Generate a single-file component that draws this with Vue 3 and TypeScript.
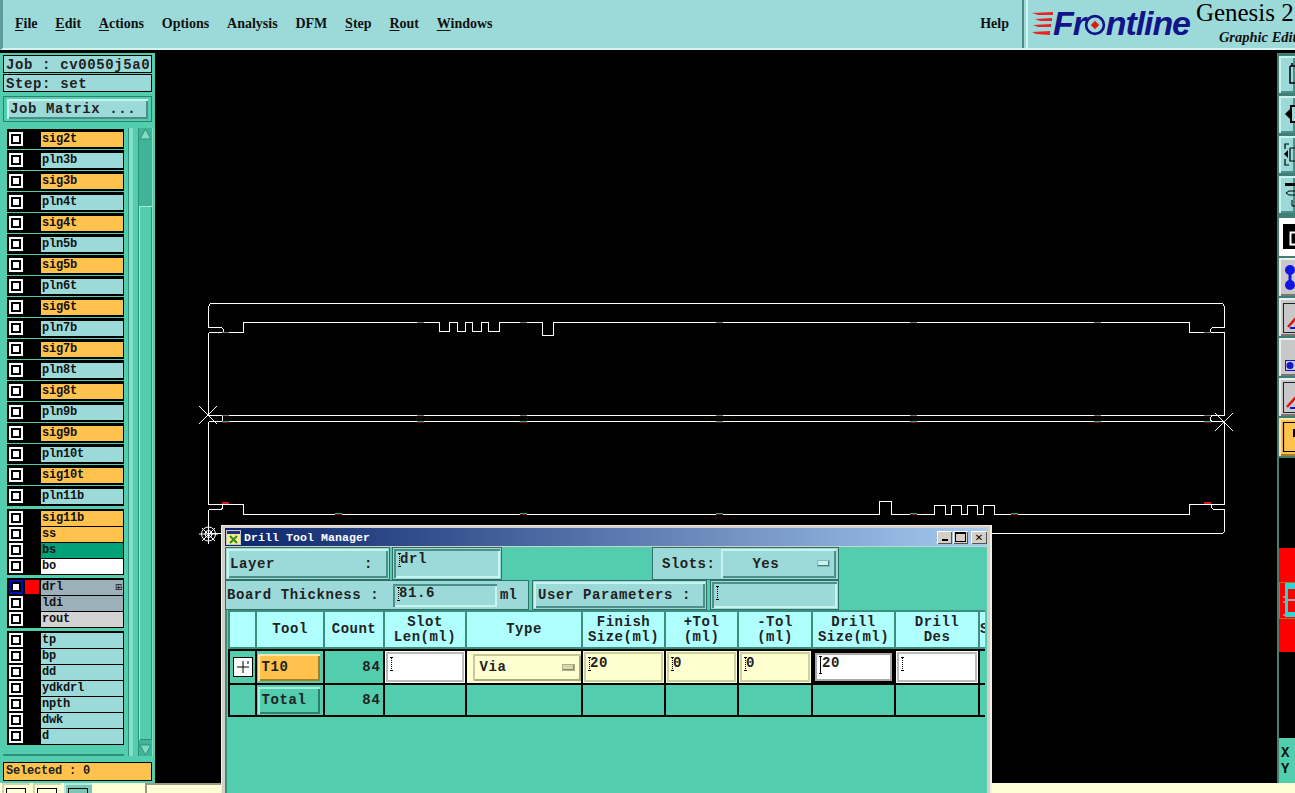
<script setup lang="ts">
interface Layer { name: string; color?: string }
const menus = [
  ['', 'F', 'ile'], ['', 'E', 'dit'], ['', 'A', 'ctions'], ['O', 'p', 'tions'],
  ['Analysis', '', ''], ['DFM', '', ''], ['', 'S', 'tep'], ['', 'R', 'out'], ['', 'W', 'indows'],
]
const singles: Layer[] = ['sig2t','pln3b','sig3b','pln4t','sig4t','pln5b','sig5b','pln6t','sig6t','pln7b','sig7b','pln8t','sig8t','pln9b','sig9b','pln10t','sig10t','pln11b']
  .map(n => ({ name: n, color: n.startsWith('sig') ? 'orange' : 'teal' }))
const groups: Layer[][] = [
  [{ name: 'sig11b', color: 'orange' }, { name: 'ss', color: 'orange' }, { name: 'bs', color: 'green' }, { name: 'bo', color: 'white' }],
  [{ name: 'drl', color: 'slate' }, { name: 'ldi', color: 'slate' }, { name: 'rout', color: 'silver' }],
  ['tp','bp','dd','ydkdrl','npth','dwk','d'].map(n => ({ name: n, color: 'teal' })),
]
const headers = [['', ''], ['Tool', ''], ['Count', ''], ['Slot', 'Len(ml)'], ['Type', ''], ['Finish', 'Size(ml)'], ['+Tol', '(ml)'], ['-Tol', '(ml)'], ['Drill', 'Size(ml)'], ['Drill', 'Des'], ['S', '']]
const outline = 'M208 327V306L210 303H1222L1224 306V327H1212L1210 329V332H1189V322H553V335H542V322H499V331H488V322H481V331H472V322H465V331H457V322H449V331H439V322H243V332H223V329L221 327H208M208 332H223M208 332V415H222V421M1210 332H1224V415H1212L1210 417V420L1212 421M208 415H1224M208 421H1224M208 421V504H243V514H879V501H891V514H934V505H945V514H951V505H961V514H967V505H977V514H983V505H994V514H1189V504H1224V421M208 509H221L222 507V504M1224 509H1213L1211 507V504M208 509V533H1222L1224 531V509'
const ticksGray = [[222,332],[417,322],[520,322],[716,322],[910,322],[1094,322],[1204,332],[222,415],[417,415],[520,415],[716,415],[910,415],[1094,415],[1204,415]]
const ticksTeal = [[222,421],[417,421],[520,421],[716,421],[910,421],[1094,421],[1204,421],[335,513],[520,513],[716,513],[910,513],[1011,513]]
</script>

<template>
  <div class="screen">
    <header class="topbar">
      <nav class="menu">
        <span v-for="m in menus" :key="m.join('')" class="menu-item">{{ m[0] }}<u>{{ m[1] }}</u>{{ m[2] }}</span>
        <span class="menu-item help">Help</span>
      </nav>
      <div class="brand">
        <svg class="streaks" width="22" height="24" viewBox="0 0 22 24">
          <path d="M0 1 L21 0 V3 L6 3Z M3 7 L20 6 V9 L8 9Z M1 13 L19 12 V15 L6 15Z M0 20 L18 19 V23 L4 22Z" fill="#ee2222" />
        </svg>
        <span class="logo">Fr<svg class="logo-o" width="22" height="22" viewBox="0 0 21 21"><circle cx="10.500" cy="10.500" r="8.500" fill="none" stroke="#14148a" stroke-width="2.500" /><path d="M10.500 6.500 14.500 10.500 10.500 14.500 6.500 10.500Z" fill="#e01818" /></svg>ntline</span>
        <div class="product">
          <span class="genesis">Genesis 2</span>
          <span class="edit">Graphic Edit</span>
        </div>
      </div>
    </header>

    <main class="middle">
      <aside class="left">
        <div class="info">Job : cv0050j5a0</div>
        <div class="info">Step: set</div>
        <div class="matrix-wrap"><div class="matrix raised">Job Matrix ...</div></div>
        <div class="list-area">
          <div class="list-frame">
            <div class="list">
              <div v-for="l in singles" :key="l.name" class="group">
                <div class="row">
                  <span class="check"></span><span class="swatch"></span>
                  <span class="label" :class="l.color">{{ l.name }}</span>
                </div>
              </div>
              <div v-for="(g, i) in groups" :key="i" class="group block">
                <div v-for="l in g" :key="l.name" class="row">
                  <span class="check" :class="{ active: l.name === 'drl' }"></span>
                  <span class="swatch" :class="{ red: l.name === 'drl' }"></span>
                  <span class="label" :class="l.color">{{ l.name }}<i v-if="l.name === 'drl'" class="mini">⊞</i></span>
                </div>
              </div>
            </div>
          </div>
          <div class="scroll">
            <svg width="13" height="12" viewBox="0 0 13 12"><path d="M6.500 1 12 11H1Z" fill="#7fdcc4" stroke="#2f8f7c" /></svg>
            <div class="track"><div class="thumb"></div></div>
            <svg width="13" height="12" viewBox="0 0 13 12"><path d="M6.500 11 12 1H1Z" fill="#7fdcc4" stroke="#2f8f7c" /></svg>
          </div>
        </div>
        <div class="selected">Selected : 0</div>
      </aside>

      <section class="canvas">
        <svg class="drawing" width="1122" height="730" viewBox="155 53 1122 730">
          <g transform="translate(.5 .5)">
            <path :d="outline" fill="none" stroke="#fff" stroke-width="1" shape-rendering="crispEdges" />
          </g>
          <rect v-for="t in ticksGray" :key="'g' + t[0] + t[1]" :x="t[0]" :y="t[1]" width="7" height="1" fill="#777" />
          <rect v-for="t in ticksTeal" :key="'t' + t[0] + t[1]" :x="t[0]" :y="t[1]" width="7" height="1" fill="#2a9f98" />
          <rect v-for="t in ticksTeal" :key="'r' + t[0] + t[1]" :x="t[0]" :y="t[1] + 1" width="7" height="1" fill="#701414" />
          <rect x="222" y="502" width="7" height="2" fill="#d81818" />
          <rect x="1204" y="502" width="7" height="2" fill="#d81818" />
          <path d="M199 406 217 424M217 406 199 424M1215 413 1233 431M1233 413 1215 431" stroke="#fff" fill="none" />
          <g stroke="#fff" fill="none">
            <path d="M199 534H218M208.500 525V544M202 528 215 541M215 528 202 541" />
            <circle cx="208.500" cy="534" r="3.500" />
            <circle cx="208.500" cy="534" r="7" />
          </g>
        </svg>
      </section>

      <aside class="right">
        <div class="rbtn t raised"><svg width="16" height="36" viewBox="1 0 16 36"><path d="M12 10H17M12 10V27H17M14 7V10" stroke="#000" stroke-width="1.500" fill="none" /></svg></div>
        <div class="rbtn t raised"><svg width="16" height="36" viewBox="1 0 16 36"><path d="M7 18 12 13V23Z" fill="#000" /><path d="M12 9H17V27H12Z" fill="#000" /><path d="M14 11H17V25H14Z" fill="#9cdada" /></svg></div>
        <div class="rbtn t raised"><svg width="16" height="36" viewBox="1 0 16 36"><path d="M6 18 10 14V22Z" fill="#000" /><path d="M11 8H7V13M7 23V29H11M12 12H17M12 12V25H17" stroke="#000" fill="none" stroke-width="1.200" /></svg></div>
        <div class="rbtn t raised"><svg width="16" height="36" viewBox="1 0 16 36"><path d="M7 7H17V10H7Z" fill="#000" /><path d="M17 15H11L8 17 11 19H17M14 24V30H17" stroke="#000" fill="none" /></svg></div>
        <div class="spacer"></div>
        <div class="rbtn black"><svg width="12" height="24" viewBox="0 0 12 24"><rect x="7.500" y="8.500" width="6" height="12" fill="#000" stroke="#fff" stroke-width="2" /></svg></div>
        <div class="rbtn g"><svg width="16" height="38" viewBox="1 0 16 38"><circle cx="12" cy="12" r="5" fill="#1414e0" /><circle cx="12" cy="27" r="5" fill="#1414e0" /><rect x="10.500" y="12" width="3" height="15" fill="#1414e0" /></svg></div>
        <div class="rbtn g"><svg width="16" height="38" viewBox="1 0 16 38"><rect x="5.500" y="5.500" width="14" height="29" fill="none" stroke="#222" /><path d="M10 29 18 20" stroke="#e01010" stroke-width="2.500" /><rect x="12" y="29" width="6" height="2" fill="#1414d8" /></svg></div>
        <div class="rbtn g"><svg width="16" height="38" viewBox="1 0 16 38"><rect x="7.500" y="22.500" width="12" height="10" fill="none" stroke="#1414c8" /><circle cx="12" cy="27.500" r="3.500" fill="#1414c8" /></svg></div>
        <div class="rbtn g"><svg width="16" height="38" viewBox="1 0 16 38"><rect x="5.500" y="4.500" width="14" height="30" fill="none" stroke="#222" /><path d="M9 29 18 19" stroke="#e01010" stroke-width="2.500" /><rect x="12" y="29" width="6" height="2" fill="#1414d8" /></svg></div>
        <div class="rbtn o"><svg width="16" height="38" viewBox="1 0 16 38"><path d="M18 4.500H5.500V33.500H18" fill="none" stroke="#000" stroke-width="1.200" /><path d="M15 11H17V19H15Z" fill="#000" /></svg></div>
        <div class="mini-map">
          <svg width="16" height="279" viewBox="0 0 16 279">
            <rect x="0" y="90" width="16" height="104" fill="#f00" />
            <rect x="0.500" y="124.500" width="20" height="36" fill="none" stroke="#b87018" />
            <path d="M6 125H16V131H9V154H16V159H6Z" fill="#28d8d8" />
            <rect x="9" y="141" width="7" height="2" fill="#aaa" />
            <path d="M4 139H6M4 144H6M4 157H6" stroke="#eee" />
          </svg>
        </div>
        <div class="xy">X<br />Y</div>
      </aside>
    </main>

    <footer class="bottom">
      <span class="bbtn"></span><span class="bbtn"></span><span class="bbtn sel"></span>
      <span class="bgap"></span>
      <span class="binput"></span>
    </footer>

    <section class="dialog">
      <div class="title">
        <svg width="15" height="15" viewBox="0 0 15 15"><rect width="15" height="15" fill="#c8c8c8" /><rect x="1" y="1" width="13" height="3" fill="#2a2a7a" /><rect x="1" y="4" width="13" height="10" fill="#f0ee90" /><path d="M4 6 11 13M11 6 4 13" stroke="#3c8a22" stroke-width="2" /></svg>
        <span class="title-text">Drill Tool Manager</span>
        <div class="win-btns">
          <span class="wb"><i class="min"></i></span>
          <span class="wb"><i class="max"></i></span>
          <span class="wb close">✕</span>
        </div>
      </div>
      <div class="form-row r1">
        <div class="layer-wrap"><div class="layer-btn raised"><span>Layer</span><span>:</span></div></div>
        <div class="field-wrap w1"><div class="field sunken"><i class="caret"></i>drl</div></div>
        <div class="slots">
          <span>Slots:</span>
          <div class="opt raised"><span>Yes</span><i class="dash"></i></div>
        </div>
      </div>
      <div class="form-row r2">
        <div class="board">
          <span class="board-label">Board Thickness :</span>
          <div class="field sunken small"><i class="caret"></i>81.6</div>
          <span class="ml">ml</span>
        </div>
        <div class="user-wrap"><div class="user raised">User Parameters :</div></div>
        <div class="field-wrap w2"><div class="field sunken"><i class="caret"></i></div></div>
      </div>
      <div class="table">
        <div class="thead">
          <div v-for="(h, i) in headers" :key="i" class="th" :class="{ cut: i === 10 }"><span>{{ h[0] }}</span><span v-if="h[1]">{{ h[1] }}</span></div>
        </div>
        <div class="tbody">
          <div class="td"><span class="plus"><svg width="18" height="18" viewBox="0 0 18 18"><path d="M3 9H15M9 3V15M14 3V6" stroke="#000" fill="none" /></svg></span></div>
          <div class="td"><div class="tool raised orange-btn">T10</div></div>
          <div class="td num">84</div>
          <div class="td cell-in white-in"><i class="caret"></i></div>
          <div class="td pale-cell"><div class="via"><span>Via</span><i class="dash"></i></div></div>
          <div class="td cell-in yellow-in"><i class="caret"></i>20</div>
          <div class="td cell-in yellow-in"><i class="caret"></i>0</div>
          <div class="td cell-in yellow-in"><i class="caret"></i>0</div>
          <div class="td cell-in focus-in"><i class="caret solid"></i>20</div>
          <div class="td cell-in white-in"><i class="caret"></i></div>
          <div class="td"></div>

          <div class="td"></div>
          <div class="td"><div class="tool raised green-btn">Total</div></div>
          <div class="td num">84</div>
          <div class="td"></div><div class="td"></div><div class="td"></div><div class="td"></div>
          <div class="td"></div><div class="td"></div><div class="td"></div><div class="td"></div>
        </div>
      </div>
    </section>
  </div>
</template>

<style>
html, body { margin: 0; background: #000; overflow: hidden; }
</style>

<style scoped>
.screen {
  --teal: #9cdada; --green: #52cdae; --orange: #ffc24d;
  position: relative; width: 1295px; height: 793px; overflow: hidden;
  display: flex; flex-direction: column; background: #000;
  font-family: "Liberation Mono", monospace; color: #111;
}
.raised { box-shadow: inset 2px 2px 0 #c8f4f0, inset -2px -2px 0 #4b8f88; }
.sunken { box-shadow: inset 2px 2px 0 #4b8f88, inset -2px -2px 0 #c8f4f0; }

.topbar {
  height: 50px; flex: none; display: flex; background: var(--teal);
  box-sizing: border-box; border-left: 3px solid #5b9c98; border-bottom: 2px solid #d4f4f2;
  margin-bottom: 3px;
}
.menu {
  width: 1021px; flex: none; display: flex; align-items: center; gap: 17.800px; padding: 0 13px 0 12px;
  box-sizing: border-box; border-right: 2px solid #4f8a86;
  font: bold 14px "Liberation Serif", serif;
}
.help { margin-left: auto; }
.menu-item u { text-underline-offset: 2px; }
.brand { flex: 1; display: flex; align-items: flex-start; border-left: 2px solid #d4f4f2; margin-left: 2px; padding-left: 4px; min-width: 0; overflow: hidden; }
.streaks { margin: 12px 0 0 0; flex: none; }
.logo { font: italic bold 34px "Liberation Sans", sans-serif; color: #14148a; letter-spacing: -1.100px; margin: 5px 0 0 -1px; display: flex; align-items: center; height: 36px; flex: none; }
.logo-o { margin: 4px 0 0 -1px; flex: none; }
.product { display: flex; flex-direction: column; margin-left: 6px; flex: none; white-space: nowrap; }
.genesis { font: 25px/26px "Liberation Serif", serif; color: #000; }
.edit { font: italic bold 14.500px/14px "Liberation Serif", serif; margin: 4px 0 0 23px; }

.middle { flex: 1; display: flex; min-height: 0; }
.left {
  width: 155px; flex: none; box-sizing: border-box; background: var(--green); padding: 2px 3px 0 3px;
  display: flex; flex-direction: column;
}
.info {
  height: 18px; flex: none; box-sizing: border-box; border: 1px solid #000; background: var(--teal); margin-bottom: 1px;
  font-size: 14px; font-weight: bold; line-height: 18px; letter-spacing: .62px; padding-left: 2px; color: #222; white-space: nowrap;
}
.matrix-wrap { margin: 3px 0 6px; padding: 2px 3px; height: 26px; box-sizing: border-box; background: var(--green); border: 1px solid #2f7f6e; }
.matrix { height: 20px; background: var(--teal); font-size: 14px; font-weight: bold; line-height: 21px; letter-spacing: .62px; padding-left: 3px; color: #222; }
.list-area { height: 628px; flex: none; display: flex; gap: 5px; }
.list-frame { width: 130px; flex: none; box-sizing: border-box; padding: 0 6px 0 0; border-right: 4px solid #82e0c8; box-shadow: inset -1px 0 0 #2f8f7c; }
.list { display: flex; flex-direction: column; gap: 1px; padding: 1px 0 0 4px; width: 117px; height: 625px; box-sizing: content-box; border-bottom: 2px solid #2f8f7c; }
.group { background: #000; padding: 2px 0 2px 2px; height: 20px; box-sizing: border-box; flex: none; }
.group.block { height: auto; padding: 1px 0 1px 2px; margin-top: 2px; }
.row { height: 16px; display: flex; align-items: center; }
.check { width: 14px; height: 14px; flex: none; box-sizing: border-box; background: #fff; border: 2px solid #fff; box-shadow: inset 0 0 0 2px #000; }
.check.active { border-color: #0010b0; }
.swatch { width: 14px; height: 14px; flex: none; margin: 0 2px; }
.swatch.red { background: #f00; }
.label {
  flex: 1; height: 15px; padding-left: 1px; font-size: 12px; font-weight: bold; line-height: 15px; letter-spacing: -.2px; color: #111;
  display: flex; justify-content: space-between; margin-right: 1px;
}
.teal { background: var(--teal); } .orange { background: var(--orange); }
.green { background: #00a078; } .white { background: #fff; }
.slate { background: #9cb0ba; } .silver { background: #d3d3d3; }
.mini { font: 9px/15px "DejaVu Sans", sans-serif; padding-right: 1px; }
.scroll { width: 15px; flex: none; background: #41b398; display: flex; flex-direction: column; align-items: center; box-shadow: inset 1px 0 0 #2f8f7c, inset -1px 0 0 #82e0c8; }
.track { flex: 1; width: 100%; padding: 66px 1px 4px; box-sizing: border-box; display: flex; }
.thumb { flex: 1; background: var(--green); box-shadow: inset 1px 1px 0 #9ceeda, inset -1px -1px 0 #2f8f7c; }
.selected { margin-top: 6px; height: 19px; box-sizing: border-box; border: 1px solid #000; background: var(--orange); font-size: 12px; font-weight: bold; line-height: 17px; letter-spacing: -.2px; padding-left: 2px; color: #222; }

.canvas { flex: 1; position: relative; background: #000; min-width: 0; }
.drawing { position: absolute; left: 0; top: 0; }

.right { width: 18px; flex: none; display: flex; flex-direction: column; background: #3f7f76; padding-top: 3px; box-sizing: border-box; overflow: hidden; border-left: 2px solid #3f7f76; }
.rbtn { height: 37px; flex: none; margin: 0 0 3px 0; background: var(--teal); overflow: hidden; box-sizing: border-box; }
.rbtn svg { display: block; }
.spacer { height: 2px; flex: none; }
.rbtn.black { background: #000; border: solid #fff; border-width: 6px 0 7px 4px; height: 38px; box-shadow: none; margin-bottom: 2px; outline: 0; }
.rbtn.g { background: #c8c8c8; box-shadow: inset 2px 2px 0 #eee, inset 0 -2px 0 #777; height: 38px; margin-bottom: 2px; }
.rbtn.o { background: var(--orange); box-shadow: inset 2px 2px 0 #ffe6a8, inset 0 -2px 0 #a87c20; height: 38px; margin-bottom: 2px; }
.mini-map { flex: 1; background: #000; min-height: 0; overflow: hidden; }
.mini-map svg { display: block; }
.xy { height: 45px; flex: none; background: var(--green); font-size: 14px; font-weight: bold; line-height: 16px; padding: 7px 0 0 2px; box-sizing: border-box; margin-top: -1px; }

.bottom { height: 10px; flex: none; background: #ffffd6; display: flex; gap: 3px; padding-left: 2px; }
.bbtn { width: 28px; height: 12px; box-sizing: border-box; background: #ffffd6; box-shadow: inset 2px 2px 0 #d4d4b0; }
.bbtn::after { content: ""; display: block; margin: 5px 4px 0; height: 8px; border: 1px solid #000; }
.bbtn.sel { background: #78c8b8; box-shadow: inset 2px 2px 0 #b6e8dc; }
.bgap { width: 49px; }
.binput { width: 80px; box-shadow: inset 2px 2px 0 #9a9a86; margin-left: -2px; }

.dialog {
  position: absolute; left: 221px; top: 525px; width: 771px; height: 290px; box-sizing: border-box;
  border: 1px solid #efefe8; border-width: 1px 2px 0 1px; background: #d4d0c8; padding: 2px 3px 0 3px;
  display: flex; flex-direction: column;
}
.title {
  height: 18px; flex: none; display: flex; align-items: center; padding-left: 1px; gap: 3px; margin-bottom: 1px;
  background: linear-gradient(90deg, #0a246a, #a6caf0);
}
.title-text { color: #fff; font-size: 11.500px; font-weight: bold; letter-spacing: .1px; }
.win-btns { margin-left: auto; display: flex; gap: 1px; }
.wb { width: 15px; height: 13px; background: #d4d0c8; box-shadow: inset 1px 1px 0 #fff, inset -1px -1px 0 #555; display: flex; align-items: center; justify-content: center; font: bold 10px "DejaVu Sans", sans-serif; color: #000; }
.wb.close { margin-left: 2px; width: 16px; }
.min { width: 6px; height: 2px; background: #000; margin-top: 6px; }
.max { width: 9px; height: 7px; border: 1px solid #000; border-top-width: 2px; }

.form-row { display: flex; flex: none; }
.dialog .form-row, .dialog .table { background: var(--green); }
.r1 { height: 33px; }
.r2 { height: 30px; }
.layer-wrap { width: 165px; flex: none; background: var(--teal); padding: 2px; box-sizing: border-box; box-shadow: inset 0 0 0 1px #2f6f68; margin-right: 2px; }
.layer-btn { height: 29px; display: flex; justify-content: space-between; align-items: center; background: var(--teal); padding: 0 15px 0 3px; font-size: 14px; font-weight: bold; letter-spacing: .6px; color: #222; }
.field-wrap { background: var(--teal); padding: 2px; box-sizing: border-box; box-shadow: inset 0 0 0 1px #2f6f68; flex: none; }
.w1 { width: 110px; }
.field { height: 100%; box-sizing: border-box; background: var(--teal); padding: 3px 3px 0 4px; display: flex; font-size: 14px; font-weight: bold; letter-spacing: .6px; color: #222; line-height: 15px; }
.caret { display: block; position: relative; width: 0; height: 14px; border-left: 1px dotted #000; margin: 1px 0 0 1px; flex: none; }
.caret::before, .caret::after { content: ""; position: absolute; left: -2px; width: 3px; height: 1px; background: #000; }
.caret::before { top: 0; } .caret::after { bottom: 0; }
.caret.solid { border-left-style: solid; height: 18px; margin: 0 1px 0 2px; }
.slots { margin-left: 150px; width: 187px; flex: none; box-sizing: border-box; background: var(--teal); box-shadow: inset 0 0 0 1px #2f6f68; display: flex; align-items: center; padding: 2px 3px 2px 10px; gap: 6px; font-size: 14px; font-weight: bold; letter-spacing: .5px; color: #222; }
.opt { flex: 1; height: 29px; background: var(--teal); display: flex; align-items: center; padding: 0 7px 0 31px; justify-content: space-between; }
.dash { display: block; width: 11px; height: 5px; background: #c8f4f0; box-shadow: inset -1px -1px 0 #3f7f76, 0 0 0 1px #7fb8b4; }
.board { width: 304px; flex: none; display: flex; align-items: center; background: var(--teal); box-shadow: inset 0 0 0 1px #2f6f68; box-sizing: border-box; padding: 2px 0 2px 2px; font-size: 14px; font-weight: bold; letter-spacing: .55px; color: #222; }
.board-label { width: 166px; flex: none; white-space: nowrap; }
.field.small { width: 104px; flex: none; height: 23px; padding-top: 2px; }
.ml { margin-left: 3px; letter-spacing: 0; }
.user-wrap { width: 175px; margin-left: 3px; flex: none; background: var(--teal); box-shadow: inset 0 0 0 1px #2f6f68; padding: 2px; box-sizing: border-box; }
.user { height: 26px; background: var(--teal); font-size: 14px; font-weight: bold; letter-spacing: .6px; color: #222; line-height: 27px; padding-left: 4px; white-space: nowrap; }
.w2 { width: 129px; margin-left: 3px; }

.table { flex: 1; padding: 0 0 0 3px; display: flex; flex-direction: column; overflow: hidden; box-shadow: inset 2px 0 0 #3b8f7c; }
.thead, .tbody { display: grid; grid-template-columns: 25px 66px 58px 80px 114px 81px 71px 72px 81px 82px 5px; gap: 2px; width: 757px; box-sizing: border-box; flex: none; }
.thead { background: #3b8f7c; padding: 2px 0 2px 2px; height: 39px; }
.th { background: #b0ffff; display: flex; flex-direction: column; align-items: center; justify-content: center; font-size: 14px; font-weight: bold; line-height: 15px; letter-spacing: .5px; color: #222; overflow: hidden; white-space: nowrap; box-sizing: border-box; }
.th.cut { align-items: flex-start; }
.tbody { background: #000; padding: 2px 0 2px 2px; height: 68px; grid-template-rows: 32px 30px; }
.td { background: var(--green); display: flex; align-items: center; justify-content: center; min-width: 0; overflow: hidden; font-size: 14px; }
.plus { width: 18px; height: 18px; background: #fff; border: 1px solid #000; display: block; }
.plus svg { display: block; }
.tool { width: 62px; height: 27px; margin-right: 3px; display: flex; align-items: center; padding: 0 0 0 4px; box-sizing: border-box; font-size: 14px; font-weight: bold; letter-spacing: .6px; color: #222; }
.orange-btn { background: var(--orange); box-shadow: inset 2px 2px 0 #ffe6a8, inset -2px -2px 0 #a87c20; }
.green-btn { background: var(--green); box-shadow: inset 2px 2px 0 #a2f0dc, inset -2px -2px 0 #2f7f6e; }
.num { justify-content: flex-end; font-weight: bold; letter-spacing: 1px; padding: 0 2px 0 0; color: #222; }
.cell-in { justify-content: flex-start; align-items: flex-start; padding: 5px 5px; box-sizing: border-box; font-size: 14px; font-weight: bold; letter-spacing: .6px; line-height: 15px; color: #222; }
.white-in { background: #fff; box-shadow: inset 0 0 0 1px #fff, inset 0 0 0 3px #bcbcbc; }
.yellow-in { background: #ffffd0; box-shadow: inset 0 0 0 1px #ffffd0, inset 0 0 0 3px #cfcfa4; }
.focus-in { background: #fff; box-shadow: inset 0 0 0 2px #000, inset 0 0 0 4px #aaa; }
.pale-cell { background: #ffffd0; }
.via { width: 108px; height: 27px; margin-left: 5px; box-sizing: border-box; background: #ffffd0; box-shadow: inset 2px 2px 0 #c8c8a0, inset -2px -2px 0 #a8a878; display: flex; align-items: center; justify-content: space-between; padding: 0 7px; font-size: 14px; font-weight: bold; letter-spacing: .6px; color: #222; }
.via .dash { background: #d8d8b0; box-shadow: inset -1px -1px 0 #8a8a60, 0 0 0 1px #b0b088; }
</style>
